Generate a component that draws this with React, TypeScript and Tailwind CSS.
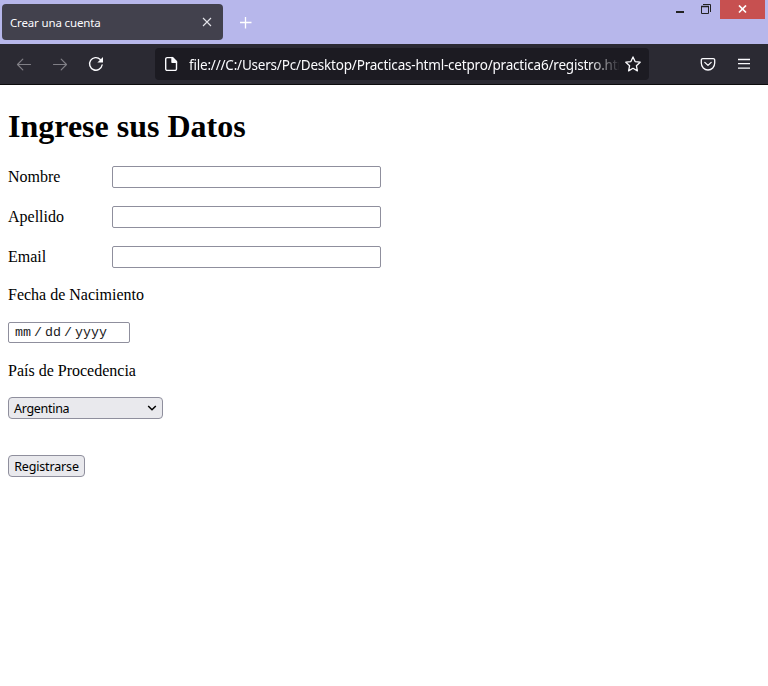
import React from 'react';

const FIELDS = ['Nombre', 'Apellido', 'Email'];

function TabStrip() {
  return (
    <div className="flex h-[44px] items-start bg-[#b7b7eb]">
      <div className="mt-1 ml-[2px] flex h-[36px] w-[221px] items-center justify-between rounded-[4px] bg-[#42414d] pr-[11px] pl-2 text-[#fbfbfe]">
        <span className="pt-[2px] font-['Noto_Sans',sans-serif] text-[11.5px] leading-none tracking-[-0.15px] whitespace-nowrap">Crear una cuenta</span>
        <svg width="10" height="10" viewBox="0 0 10 10" fill="none" stroke="#e4e4ea" strokeWidth="1.1">
          <path d="M1 1l8 8M9 1l-8 8" />
        </svg>
      </div>
      <svg className="mt-[17px] ml-[17px]" width="12" height="12" viewBox="0 0 12 12" fill="none" stroke="#fff" strokeWidth="1.3">
        <path d="M5.5 0v11.5M0 5.5h11.5" />
      </svg>
      <div className="ml-auto flex">
        <svg width="44" height="19" viewBox="0 0 44 19" fill="none" stroke="#222">
          <path d="M0 12h8" strokeWidth="2" />
          <path d="M25.5 6.5h7v7h-7z" />
          <path d="M25 6.5h8" strokeWidth="1.5" />
          <path d="M27 4.5h7.5V12" />
        </svg>
        <div className="mr-[3px] flex h-[19px] w-[45px] items-center justify-center bg-[#c75050]">
          <svg width="9" height="9" viewBox="0 0 9 9" fill="none" stroke="#fff" strokeWidth="1.7">
            <path d="M1 .5l7 7M8 .5l-7 7" />
          </svg>
        </div>
      </div>
    </div>
  );
}

function Toolbar() {
  return (
    <div className="flex h-[41px] items-start border-b border-[#0c0c0d] bg-[#2b2a33]">
      <svg className="mt-3 ml-4" width="16" height="16" viewBox="0 0 16 16" fill="none" stroke="#807f86" strokeWidth="1.2" strokeLinecap="round" strokeLinejoin="round">
        <path d="M14.5 8.5H1.5M6.8 3.2L1.5 8.5l5.3 5.3" />
      </svg>
      <svg className="mt-3 ml-5" width="16" height="16" viewBox="0 0 16 16" fill="none" stroke="#807f86" strokeWidth="1.2" strokeLinecap="round" strokeLinejoin="round">
        <path d="M1.5 8.5h13M9.2 3.2l5.3 5.3-5.3 5.3" />
      </svg>
      <svg className="mt-3 ml-5" width="16" height="16" viewBox="0 0 16 16" fill="none" stroke="#fbfbfe" strokeWidth="1.4" strokeLinecap="round">
        <path d="M12.3 3.4A6.3 6.3 0 1 0 14.1 9" />
        <path d="M15 1v5.6H9.4z" fill="#fbfbfe" stroke="none" />
      </svg>
      <div className="mt-1 ml-[51px] flex h-[32px] w-[494px] items-start rounded-[4px] bg-[#1c1b22] text-[#fbfbfe]">
        <svg className="mt-2 ml-2" width="16" height="16" viewBox="0 0 16 16" fill="none" stroke="#fbfbfe" strokeWidth="1.4" strokeLinejoin="round">
          <path d="M4.2 1.6h5.3l4 4v7.3a1.5 1.5 0 0 1-1.5 1.5H4.2a1.5 1.5 0 0 1-1.5-1.5V3.1a1.5 1.5 0 0 1 1.5-1.5z" />
          <path d="M9 1.6v4.6h4.5z" fill="#fbfbfe" />
        </svg>
        <div className="ml-[10px] h-[32px] w-[430px] overflow-hidden [mask-image:linear-gradient(to_right,black_400px,transparent_432px)]">
          <span className="font-['Noto_Sans',sans-serif] text-[13.5px] leading-[35px] tracking-[-0.2px] whitespace-nowrap">file:///C:/Users/Pc/Desktop/Practicas-html-cetpro/practica6/registro.html</span>
        </div>
        <svg className="mt-2 ml-[6px]" width="16" height="16" viewBox="0 0 16 16" fill="none" stroke="#fbfbfe" strokeWidth="1.3" strokeLinejoin="round">
          <path d="M8 .9l2.1 4.7 5.1.6-3.8 3.5 1 5.2L8 12.3l-4.4 2.6 1-5.2L.8 6.2l5.1-.6z" />
        </svg>
      </div>
      <svg className="mt-3 ml-[51px]" width="16" height="16" viewBox="0 0 16 16" fill="none" stroke="#fbfbfe" strokeWidth="1.3" strokeLinecap="round" strokeLinejoin="round">
        <path d="M2.8 2.6h10.4a1.5 1.5 0 0 1 1.5 1.5v3a6.7 6.9 0 0 1-13.4 0v-3a1.5 1.5 0 0 1 1.5-1.5z" />
        <path d="M4.8 6.4L8 9.4l3.2-3" />
      </svg>
      <svg className="mt-3 ml-[22px]" width="12" height="16" viewBox="0 0 12 16" fill="none" stroke="#fbfbfe" strokeWidth="1.3">
        <path d="M0 3.5h12M0 7.7h12M0 12.2h12" />
      </svg>
    </div>
  );
}

export default function App() {
  return (
    <div className="h-[686px] w-[768px] overflow-hidden bg-white text-black">
      <TabStrip />
      <Toolbar />
      <main className="flex flex-col items-start pl-2 font-['Liberation_Serif',serif] text-[16px] leading-[18px]">
        <h1 className="mt-[23px] text-[32px] leading-[36px] font-bold">Ingrese sus Datos</h1>
        <div className="mt-[22px] flex flex-col gap-[18px]">
          {FIELDS.map((name) => (
            <label key={name} className="flex h-[22px] items-center">
              <span className="w-[104px]">{name}</span>
              <input className="h-[22px] w-[269px] rounded-[2px] border border-[#8f8f9d] bg-white outline-none" />
            </label>
          ))}
        </div>
        <p className="mt-[18px]">Fecha de Nacimiento</p>
        <div className="mt-[18px] flex h-[21px] w-[122px] items-center rounded-[2px] border border-[#8f8f9d] pl-[6px] font-['Liberation_Mono',monospace] text-[13.333px] leading-none whitespace-nowrap text-[#222]">
          <span>mm</span>
          <span className="ml-[3px]">/</span>
          <span className="ml-[3px]">dd</span>
          <span className="ml-[3px]">/</span>
          <span className="ml-[3px]">yyyy</span>
        </div>
        <p className="mt-[19px]">País de Procedencia</p>
        <div className="mt-[17px] flex h-[22px] w-[155px] items-center justify-between rounded-[4px] border border-[#8f8f9d] bg-[#e9e9ed] pr-[5px] pl-[5px] font-['Noto_Sans',sans-serif] text-[12.5px] leading-none tracking-[-0.3px]">
          <span className="pt-[2px]">Argentina</span>
          <svg width="10" height="6" viewBox="0 0 10 6" fill="none" stroke="#000" strokeWidth="1.5">
            <path d="M1.2 1l3.8 3.8L8.8 1" />
          </svg>
        </div>
        <button className="mt-[36px] flex h-[22px] w-[77px] items-center justify-center rounded-[4px] border border-[#8f8f9d] bg-[#e9e9ed] pt-[2px] font-['Noto_Sans',sans-serif] text-[12.5px] leading-none tracking-[-0.15px]">
          Registrarse
        </button>
      </main>
    </div>
  );
}
